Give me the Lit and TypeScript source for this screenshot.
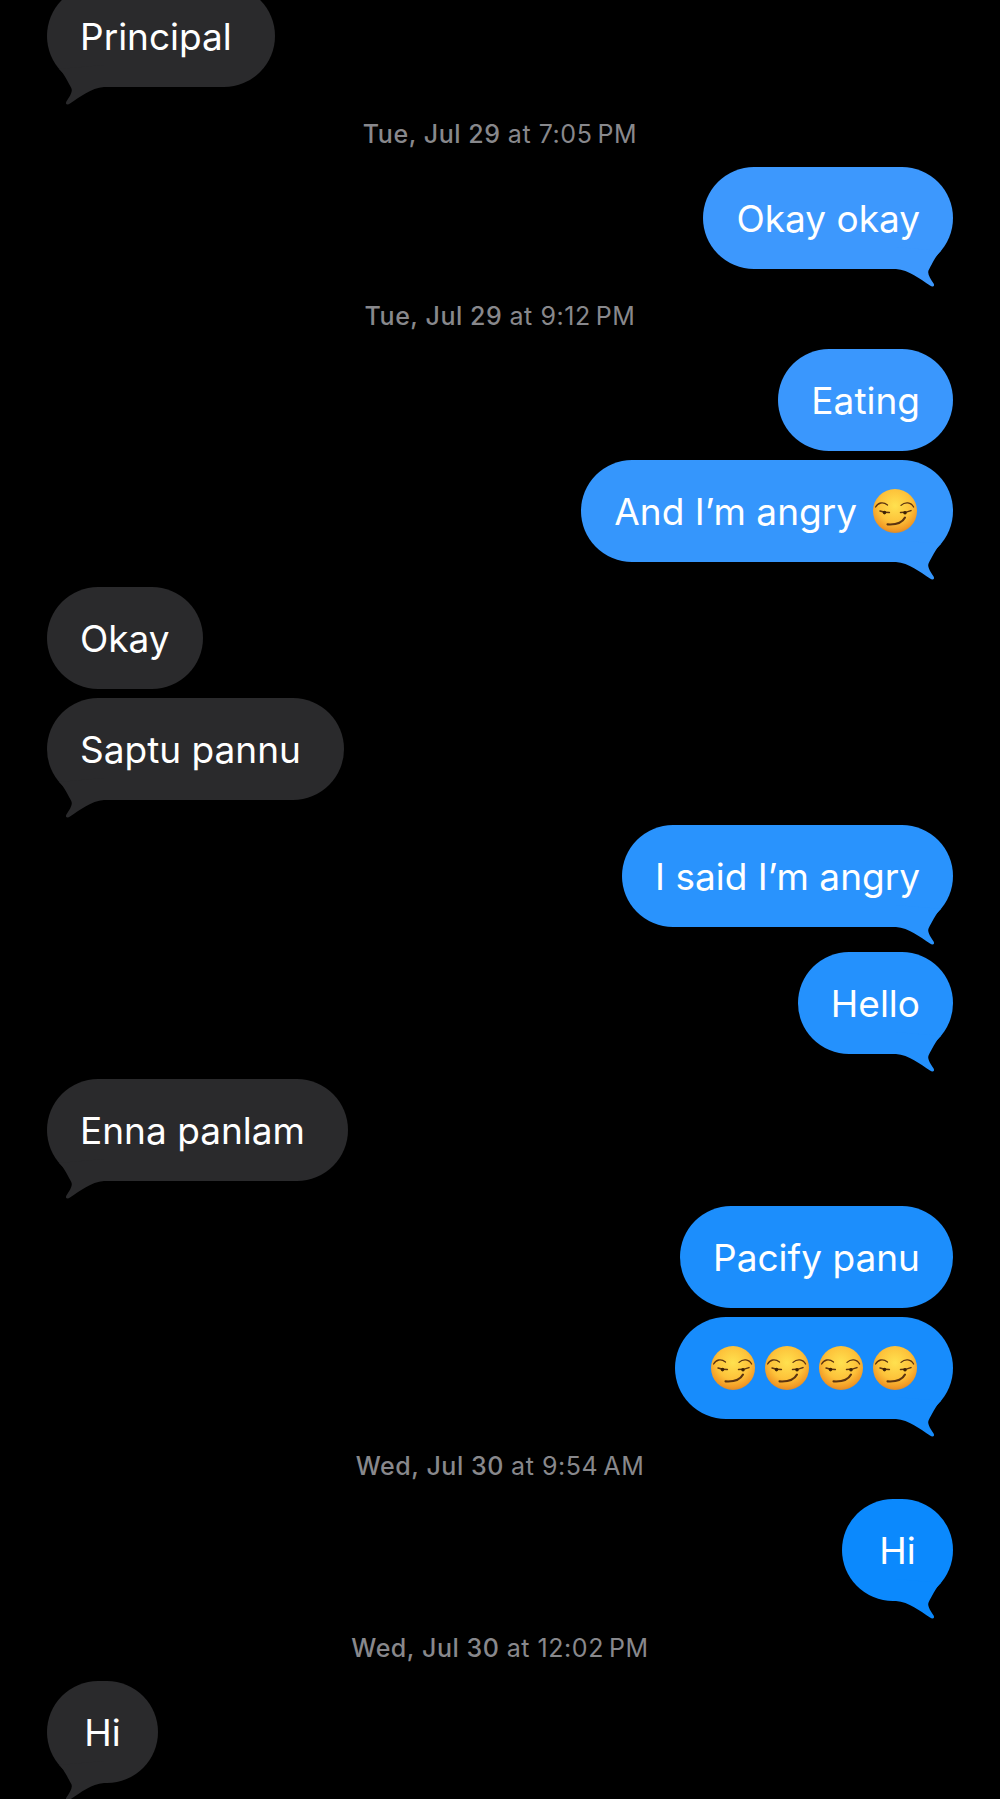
import {html, css, LitElement, svg} from 'lit';
import {customElement} from 'lit/decorators.js';
import {map} from 'lit/directives/map.js';

declare interface Message {
  kind: 'time' | 'in' | 'out';
  text?: string;
  date?: string;
  hour?: string;
  smirks?: number;
  tail?: boolean;
  blue?: string;
  grouped?: boolean;
  roomy?: boolean;
}

const MESSAGES: Message[] = [
  {kind: 'in', text: 'Principal', tail: true, roomy: true},
  {kind: 'time', date: 'Tue, Jul 29', hour: 'at 7:05\u2009PM'},
  {kind: 'out', text: 'Okay okay', tail: true, blue: '#3d98fd'},
  {kind: 'time', date: 'Tue, Jul 29', hour: 'at 9:12\u2009PM'},
  {kind: 'out', text: 'Eating', blue: '#3a97fd'},
  {kind: 'out', text: 'And I\u2019m angry', smirks: 1, tail: true, blue: '#3596fc', grouped: true},
  {kind: 'in', text: 'Okay'},
  {kind: 'in', text: 'Saptu pannu', tail: true, grouped: true, roomy: true},
  {kind: 'out', text: 'I said I\u2019m angry', tail: true, blue: '#2993fd'},
  {kind: 'out', text: 'Hello', tail: true, blue: '#2491fd'},
  {kind: 'in', text: 'Enna panlam', tail: true, roomy: true},
  {kind: 'out', text: 'Pacify panu', blue: '#1c8efc'},
  {kind: 'out', smirks: 4, tail: true, blue: '#178cfc', grouped: true},
  {kind: 'time', date: 'Wed, Jul 30', hour: 'at 9:54\u2009AM'},
  {kind: 'out', text: 'Hi', tail: true, blue: '#0b89fd'},
  {kind: 'time', date: 'Wed, Jul 30', hour: 'at 12:02\u2009PM'},
  {kind: 'in', text: 'Hi', tail: true},
];

const smirkFace = html`
<svg class="smirk" viewBox="0 0 44 44">
  <defs>
    <radialGradient id="face" cx="50%" cy="38%" r="62%">
      <stop offset="0" stop-color="#ffe14f"></stop>
      <stop offset="0.6" stop-color="#fdc23a"></stop>
      <stop offset="0.9" stop-color="#f29a25"></stop>
      <stop offset="1" stop-color="#dd8a2a"></stop>
    </radialGradient>
  </defs>
  <circle cx="22" cy="22" r="22" fill="url(#face)"></circle>
  ${svg`
  <g fill="none" stroke="#5c3410" stroke-linecap="round">
    <path d="M2.6 18 C5 13.6 10 12.4 14.5 16" stroke-width="1.3"></path>
    <path d="M28 16.4 C32 12.6 38 13 40.6 18" stroke-width="1.3"></path>
    <path d="M7 22 C10 23 13 23.6 16.4 23.6" stroke-width="1.5"></path>
    <path d="M27.5 23.6 C31 23.6 35 23 38 21.6" stroke-width="1.5"></path>
    <path d="M14.5 35.4 C21 35.8 29 34.4 32 28.6" stroke-width="2.1"></path>
  </g>
  <circle cx="11.5" cy="23.6" r="1.8" fill="#3d2206"></circle>
  <circle cx="32" cy="23.8" r="1.8" fill="#3d2206"></circle>`}
</svg>`;

const tailShape = html`
<svg class="tail" viewBox="0 0 60 42">
  <path d="M3 22 C16 23 27 32 37 38.6 C40 40.6 42 39 40.6 36.4 C37 31 33.6 26 36 22.4 C38 19 43 8 48 4 L3 0 Z"></path>
</svg>`;

@customElement('app-root')
export class AppRoot extends LitElement {
  static styles = css`
  :host {
    background-color: #000;
    display: block;
    font-family: Inter, "Liberation Sans", sans-serif;
    height: 1799px;
    overflow: hidden;
  }

  #thread {
    box-sizing: border-box;
    display: flex;
    flex-direction: column;
    margin-top: -15px;
    padding: 0 47px;
  }

  .time {
    color: #88888c;
    font-size: 25px;
    font-weight: 500;
    height: 20px;
    letter-spacing: 0.55px;
    line-height: 20px;
    margin: 37px 0 23px;
    text-align: center;
  }

  .time span {
    font-weight: 400;
  }

  .bubble {
    align-items: center;
    background-color: var(--bubble);
    border-radius: 51px;
    box-sizing: border-box;
    color: #fff;
    display: flex;
    font-size: 37px;
    gap: 16px;
    height: 102px;
    justify-content: center;
    margin-top: 25px;
    min-width: 111px;
    padding: 0 33px;
    position: relative;
    white-space: nowrap;
    width: fit-content;
  }

  .bubble:first-child, .time + .bubble {
    margin-top: 0;
  }

  .bubble.grouped {
    margin-top: 9px;
  }

  .bubble.in {
    --bubble: #2a2a2c;
  }

  .bubble.out {
    align-self: flex-end;
  }

  .bubble.roomy {
    padding-right: 43px;
  }

  .bubble.with-faces {
    padding-right: 36px;
  }

  .bubble.only-faces {
    padding: 0 36px;
  }

  .faces {
    display: flex;
    gap: 10px;
  }

  .smirk {
    display: block;
    height: 44px;
    width: 44px;
  }

  .tail {
    bottom: -20px;
    fill: var(--bubble);
    height: 42px;
    position: absolute;
    right: 0;
    width: 60px;
  }

  .in .tail {
    left: 0;
    right: auto;
    transform: scaleX(-1);
  }
  `;

  renderMessage(msg: Message) {
    if (msg.kind === 'time') {
      return html`<div class="time">${msg.date} <span>${msg.hour}</span></div>`;
    }
    const faces = msg.smirks ? (msg.text ? 'with-faces' : 'only-faces') : '';
    return html`
    <div
      class="bubble ${msg.kind} ${msg.grouped ? 'grouped' : ''} ${msg.roomy ? 'roomy' : ''} ${faces}"
      style=${msg.blue ? `--bubble: ${msg.blue}` : ''}
    >
      ${msg.text ? html`<span>${msg.text}</span>` : ''}
      ${msg.smirks ? html`
      <div class="faces">
        ${map(Array(msg.smirks).fill(0), () => smirkFace)}
      </div>` : ''}
      ${msg.tail ? tailShape : ''}
    </div>
    `;
  }

  render() {
    return html`
    <div id="thread">
      ${map(MESSAGES, (msg: Message) => this.renderMessage(msg))}
    </div>
    `;
  }
}
